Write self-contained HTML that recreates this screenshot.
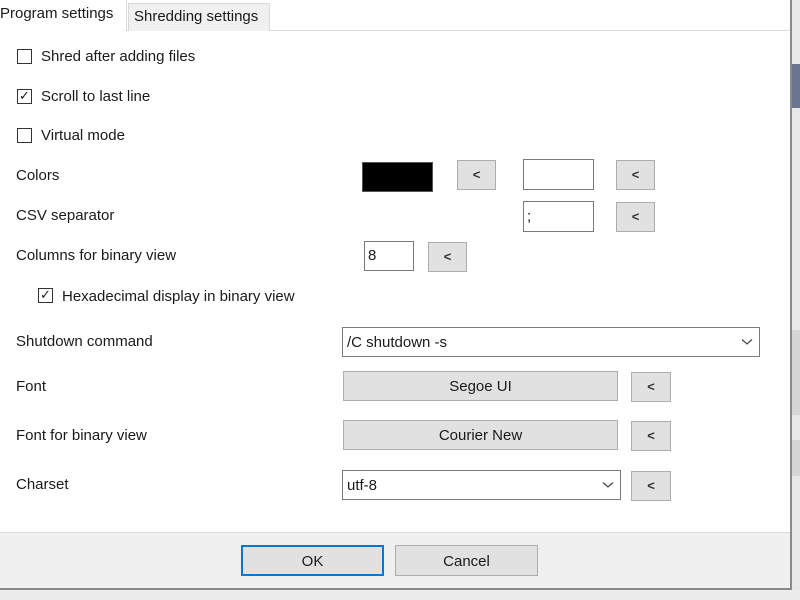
<!DOCTYPE html>
<html><head><style>
body{margin:0;width:800px;height:600px;position:relative;overflow:hidden;background:#fff;font-family:"Segoe UI","Liberation Sans",sans-serif;font-size:15px;color:#1a1a1a}
.a{position:absolute}
.t{position:absolute;line-height:18px;white-space:nowrap}
.cb{position:absolute;width:13px;height:13px;border:1px solid #333;background:#fff}
.btn{position:absolute;background:#e1e1e1;border:1px solid #adadad;box-sizing:border-box;text-align:center;font-size:15px}
.sm{font-size:13px;font-weight:bold;color:#333}
.box{position:absolute;background:#fff;border:1px solid #7a7a7a;box-sizing:border-box}
.chk{position:absolute;left:1px;top:-1px;font-size:13px;line-height:13px}
.chev{position:absolute;right:6px;top:10px}
</style></head><body>
<div class="a" style="left:792px;top:0;width:8px;height:600px;background:#e8e8e8"></div>
<div class="a" style="left:792px;top:64px;width:8px;height:44px;background:#6a7590"></div>
<div class="a" style="left:792px;top:330px;width:8px;height:85px;background:#d6d6d6"></div>
<div class="a" style="left:792px;top:440px;width:8px;height:36px;background:#d6d6d6"></div>
<div class="a" style="left:790px;top:0;width:2px;height:590px;background:#8a8a8a"></div>
<div class="a" style="left:0;top:30px;width:790px;height:1px;background:#dcdcdc"></div>
<div class="a" style="left:0;top:0;width:126px;height:31px;background:#fff;border-right:1px solid #d9d9d9"></div>
<div class="a" style="left:128px;top:3px;width:140px;height:27px;background:#f0f0f0;border:1px solid #d9d9d9;border-bottom:none"></div>
<div class="t" style="left:0;top:5px">Program settings</div>
<div class="t" style="left:134px;top:8px">Shredding settings</div>

<div class="cb" style="left:17px;top:49px"></div><div class="t" style="left:41px;top:48px">Shred after adding files</div>
<div class="cb" style="left:17px;top:89px"><span class="chk">✓</span></div><div class="t" style="left:41px;top:88px">Scroll to last line</div>
<div class="cb" style="left:17px;top:128px"></div><div class="t" style="left:41px;top:127px">Virtual mode</div>

<div class="t" style="left:16px;top:167px">Colors</div>
<div class="a" style="left:362px;top:162px;width:71px;height:30px;background:#000;border:1px solid #555;box-sizing:border-box"></div>
<div class="btn sm" style="left:457px;top:160px;width:39px;height:30px;line-height:28px">&lt;</div>
<div class="box" style="left:523px;top:159px;width:71px;height:31px"></div>
<div class="btn sm" style="left:616px;top:160px;width:39px;height:30px;line-height:28px">&lt;</div>

<div class="t" style="left:16px;top:207px">CSV separator</div>
<div class="box" style="left:523px;top:201px;width:71px;height:31px;padding:6px 3px;line-height:18px">;</div>
<div class="btn sm" style="left:616px;top:202px;width:39px;height:30px;line-height:28px">&lt;</div>

<div class="t" style="left:16px;top:247px">Columns for binary view</div>
<div class="box" style="left:364px;top:241px;width:50px;height:30px;padding:5px 3px;line-height:18px">8</div>
<div class="btn sm" style="left:428px;top:242px;width:39px;height:30px;line-height:28px">&lt;</div>

<div class="cb" style="left:38px;top:288px"><span class="chk">✓</span></div><div class="t" style="left:62px;top:288px">Hexadecimal display in binary view</div>

<div class="t" style="left:16px;top:333px">Shutdown command</div>
<div class="box" style="left:342px;top:327px;width:418px;height:30px;padding:5px 4px;line-height:20px">/C shutdown -s<svg class="chev" width="12" height="8" viewBox="0 0 12 8"><path d="M1 1.5 L6 6 L11 1.5" fill="none" stroke="#444" stroke-width="1.2"/></svg></div>

<div class="t" style="left:16px;top:378px">Font</div>
<div class="btn" style="left:343px;top:371px;width:275px;height:30px;line-height:30px">Segoe UI</div>
<div class="btn sm" style="left:631px;top:372px;width:40px;height:30px;line-height:28px">&lt;</div>

<div class="t" style="left:16px;top:427px">Font for binary view</div>
<div class="btn" style="left:343px;top:420px;width:275px;height:30px;line-height:30px">Courier New</div>
<div class="btn sm" style="left:631px;top:421px;width:40px;height:30px;line-height:28px">&lt;</div>

<div class="t" style="left:16px;top:476px">Charset</div>
<div class="box" style="left:342px;top:470px;width:279px;height:30px;padding:5px 4px;line-height:20px">utf-8<svg class="chev" width="12" height="8" viewBox="0 0 12 8"><path d="M1 1.5 L6 6 L11 1.5" fill="none" stroke="#444" stroke-width="1.2"/></svg></div>
<div class="btn sm" style="left:631px;top:471px;width:40px;height:30px;line-height:28px">&lt;</div>

<div class="a" style="left:0;top:532px;width:790px;height:56px;background:#f0f0f0;border-top:1px solid #dcdcdc"></div>
<div class="btn" style="left:241px;top:545px;width:143px;height:31px;line-height:29px;border:2px solid #0078d7">OK</div>
<div class="btn" style="left:395px;top:545px;width:143px;height:31px;line-height:31px">Cancel</div>
<div class="a" style="left:0;top:588px;width:792px;height:2px;background:#8a8a8a"></div>
<div class="a" style="left:0;top:590px;width:800px;height:10px;background:#ececec"></div>
</body></html>
